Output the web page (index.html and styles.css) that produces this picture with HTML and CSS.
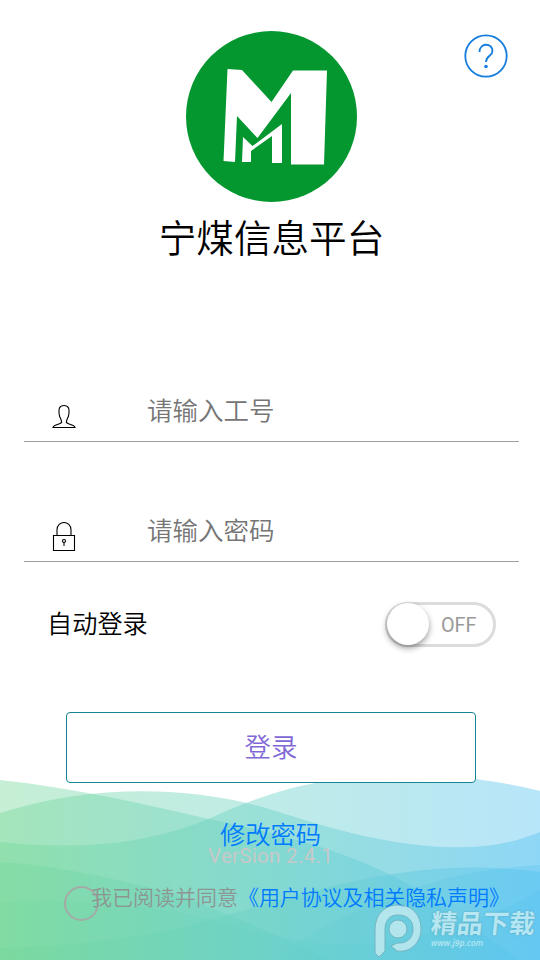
FILE: index.html
```html
<!DOCTYPE html>
<html lang="zh-CN">
<head>
    <meta charset="utf-8">
    <meta name="viewport" content="width=device-width, initial-scale=1">
    <title>宁煤信息平台</title>
    <link rel="stylesheet" href="styles.css">
</head>
<body>
<svg class="waves" viewBox="0 770 540 190" aria-hidden="true">
    <defs>
        <linearGradient id="wave" gradientUnits="userSpaceOnUse" x1="0" y1="0" x2="540" y2="0">
            <stop offset="0" stop-color="#76d899"/>
            <stop offset=".5" stop-color="#66d0c6"/>
            <stop offset="1" stop-color="#55c2f1"/>
        </linearGradient>
    </defs>
    <g fill="url(#wave)">
        <path opacity=".42" d="M0 780C75 788 145 804 213 820C290 836 350 852 410 885C455 912 495 943 520 960H0Z"/>
        <path opacity=".42" d="M0 813C80 787 171 785 247 803C290 814 330 831 390 841C450 851 497 850 540 832V960H0Z"/>
        <path opacity=".42" d="M0 842C75 850 145 846 213 817C275 789 325 775 413 775C455 775 500 781 540 791V960H0Z"/>
        <path opacity=".42" d="M0 862C60 866 110 878 160 890C210 905 270 932 330 960H0Z"/>
        <path opacity=".42" d="M0 948C85 945 150 937 210 920C270 903 330 883 400 873C450 866 495 866 540 872V960H0Z"/>
        <path opacity=".3" d="M0 902C75 898 150 904 213 920C260 932 300 943 337 944C400 946 480 925 540 890V960H0Z"/>
        <path opacity=".3" d="M275 960C310 930 355 911 403 892C445 876 490 868 540 865V960Z"/>
    </g>
</svg>

<div class="page">
    <header class="header">
        <svg class="logo" viewBox="0 0 171 171">
            <circle cx="85.5" cy="85.5" r="85.5" fill="#04962f"/>
            <g fill="#fff">
                <path d="M41.500 38L56 39L85.500 71L107 39.500H141L138 133.500H105V62L71.500 107L51 85L49 131L37.500 130Z"/>
                <path d="M57 106L66.500 115L96 93V132H86V105L65 120V131H56Z"/>
            </g>
        </svg>
        <h1 class="title">宁煤信息平台</h1>
        <svg class="help" viewBox="0 0 44 44">
            <circle cx="22" cy="22" r="20.700"/>
            <path d="M15.500 18C15.500 8.500 28.500 8.500 28.500 17C28.500 22 22 21.500 22 28"/>
            <circle class="dot" cx="22" cy="32.500" r="1.800"/>
        </svg>
    </header>

    <form class="form">
        <label class="field">
            <svg class="icon" viewBox="0 0 24 30">
                <path d="M1 28.500C2 25 9 25.500 9.500 23.500C9.800 21 8.500 20 7.500 17C6 9.500 7.500 6.500 12 6.500S18 9.500 16.500 17C15.500 20 14.200 21 14.500 23.500C15 25.500 22 25 23 28.500Z"/>
            </svg>
            <input class="input" type="text" placeholder="请输入工号">
        </label>
        <label class="field">
            <svg class="icon icon-lock" viewBox="0 0 24 30">
                <path d="M1.500 13.500H22.500V28.500H1.500ZM5 13.500V8C5 -2 19 -2 19 8V13.500"/>
                <circle cx="12" cy="19" r="1.500"/>
                <path d="M12 20.500V24"/>
            </svg>
            <input class="input" type="password" placeholder="请输入密码">
        </label>
        <div class="auto">
            <span class="auto-label">自动登录</span>
            <span class="switch"><span class="knob"></span><span class="state">OFF</span></span>
        </div>
        <button class="login" type="button">登录</button>
    </form>

    <footer class="footer">
        <a class="change">修改密码</a>
        <span class="version">VerSion 2.4.1</span>
        <div class="agree">
            <span class="check"></span>
            <span class="agree-text">我已阅读并同意<a class="terms">《用户协议及相关隐私声明》</a></span>
        </div>
    </footer>
</div>

<div class="watermark">
    <svg class="mark" viewBox="0 0 50 56">
        <path fill-rule="evenodd" d="M2 27C2 12 11 2 25 2S48 12 48 26C48 40 37 50 24 48L18 43L24 40C34 41 40 35 40 26S34 12 25 12S12 18 12 27V48L6 54L2 50Z"/>
        <circle cx="25" cy="26" r="9"/>
    </svg>
    <div class="mark-text">
        <span class="mark-name">精品下载</span>
        <span class="mark-url">www.j9p.com</span>
    </div>
</div>
</body>
</html>
```
FILE: styles.css
```css
*,
*::before,
*::after {
    box-sizing: border-box;
}

body {
    margin: 0;
    position: relative;
    height: 960px;
    overflow: hidden;
    background: #fff;
    font-family: Roboto, "Noto Sans CJK SC", sans-serif;
    font-weight: 350;
    color: #000;
}

.waves {
    position: absolute;
    left: 0;
    bottom: 0;
    width: 540px;
    height: 190px;
}

.page {
    position: relative;
    display: flex;
    flex-direction: column;
    height: 960px;
}

.header {
    display: flex;
    flex-direction: column;
    align-items: center;
    height: 382px;
    padding: 31px 0 0 3px;
}

.logo {
    width: 171px;
    height: 171px;
}

.title {
    margin: 9px 0 0;
    font-size: 37.6px;
    line-height: 56px;
    font-weight: 350;
}

.help {
    position: absolute;
    top: 34px;
    right: 32px;
    width: 44px;
    height: 44px;
    fill: none;
    stroke: #147ddd;
    stroke-width: 1.8;
}

.help .dot {
    fill: #147ddd;
    stroke: none;
}

.form {
    display: flex;
    flex-direction: column;
    padding: 0 21px 0 24px;
}

.field {
    display: flex;
    align-items: flex-start;
    height: 60px;
    padding-left: 28px;
    border-bottom: 1px solid #a0a0a0;
}

.field + .field {
    margin-top: 60px;
}

.icon {
    width: 24px;
    height: 30px;
    margin-top: 17px;
    fill: none;
    stroke: #000;
    stroke-width: 1.1;
}

.icon-lock {
    margin-top: 20px;
}

.input {
    width: 330px;
    height: 40px;
    margin: 9px 0 0 71px;
    padding: 0;
    border: 0;
    outline: none;
    background: none;
    font: inherit;
    font-size: 25.5px;
}

.input::placeholder {
    color: #757575;
}

.auto {
    display: flex;
    align-items: center;
    justify-content: space-between;
    height: 46px;
    margin: 39px 23px 0;
    font-size: 25.2px;
}

.auto-label {
    padding-bottom: 5px;
}

.switch {
    display: flex;
    align-items: center;
    width: 111px;
    height: 45px;
    border: 3px solid #dcdcdc;
    border-radius: 23px;
    background: #fff;
}

.knob {
    width: 42px;
    height: 42px;
    margin-left: -1px;
    border-radius: 50%;
    background: #fff;
    box-shadow: 0 3px 6px rgba(0, 0, 0, .4);
}

.state {
    margin: 2px 0 0 12px;
    font-size: 19.8px;
    font-weight: 400;
    color: #999;
}

.login {
    width: 410px;
    height: 71px;
    margin: 65px 0 0 42px;
    padding: 0 0 4px;
    border: 1px solid #168493;
    border-radius: 4px;
    background: #fff;
    color: #8168d6;
    font: inherit;
    font-size: 26.5px;
}

.footer {
    display: flex;
    flex-direction: column;
    align-items: center;
    margin-top: 34px;
    padding-left: 1px;
}

.change {
    font-size: 25.3px;
    line-height: 38px;
    color: #007aff;
}

.version {
    margin-top: -11px;
    font-size: 20.5px;
    line-height: 24px;
    font-weight: 400;
    letter-spacing: .3px;
    color: #c8c8c8;
}

.agree {
    display: flex;
    align-self: flex-start;
    margin: 15px 0 0 63px;
    font-size: 21px;
    line-height: 30px;
    white-space: nowrap;
    color: #8c9692;
}

.check {
    width: 35px;
    height: 35px;
    margin: 3px -8px 0 0;
    border: 2px solid #a5aaa7;
    border-radius: 50%;
}

.terms {
    letter-spacing: -.1px;
    color: #007aff;
}

.watermark {
    position: absolute;
    left: 373px;
    top: 903px;
    display: flex;
    opacity: .75;
}

.mark {
    width: 50px;
    height: 56px;
    fill: #cbedf2;
    stroke: #75aeb9;
    stroke-width: 1;
}

.mark-text {
    display: flex;
    flex-direction: column;
    margin-left: 8px;
    color: #d0f0f6;
}

.mark-name {
    margin-top: 4px;
    font-size: 26px;
    line-height: 34px;
    font-weight: 700;
    transform: skewX(-6deg);
    text-shadow: 0 0 2px #4b8f9e;
}

.mark-url {
    margin-top: -4px;
    font-family: "Open Sans", sans-serif;
    font-size: 8.5px;
    line-height: 12px;
    font-style: italic;
    font-weight: 600;
}
```
